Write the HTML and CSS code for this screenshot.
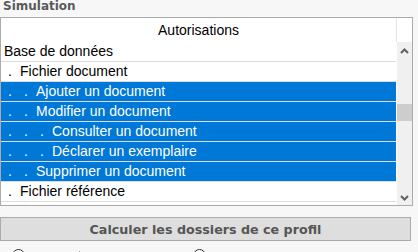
FILE: index.html
```html
<!DOCTYPE html>
<html lang="fr">
<head>
<meta charset="utf-8">
<link rel="stylesheet" href="styles.css">
</head>
<body>
<div class="page">
  <div class="title">Simulation</div>
  <div class="grid">
    <div class="head">
      <div class="head-cell">Autorisations</div>
      <div class="head-corner"></div>
    </div>
    <div class="body">
      <div class="rows">
        <div class="row">Base de données</div>
        <div class="row"><span class="ind">.</span>Fichier document</div>
        <div class="row sel"><span class="ind">.</span><span class="ind">.</span>Ajouter un document</div>
        <div class="row sel"><span class="ind">.</span><span class="ind">.</span>Modifier un document</div>
        <div class="row sel"><span class="ind">.</span><span class="ind">.</span><span class="ind">.</span>Consulter un document</div>
        <div class="row sel"><span class="ind">.</span><span class="ind">.</span><span class="ind">.</span>Déclarer un exemplaire</div>
        <div class="row sel"><span class="ind">.</span><span class="ind">.</span>Supprimer un document</div>
        <div class="row"><span class="ind">.</span>Fichier référence</div>
        <div class="row"></div>
      </div>
      <div class="scroll">
        <svg class="arrow" width="15" height="10" viewBox="0 0 15 10"><path d="M4 7 L7.5 3.5 L11 7" fill="none" stroke="#606060" stroke-width="2"/></svg>
        <div class="track"><div class="thumb"></div></div>
        <svg class="arrow down" width="15" height="10" viewBox="0 0 15 10"><path d="M4 3 L7.5 6.5 L11 3" fill="none" stroke="#606060" stroke-width="2"/></svg>
      </div>
    </div>
  </div>
  <button class="btn">Calculer les dossiers de ce profil</button>
  <div class="opts">
    <span class="radio"></span><span class="tick"></span>
    <span class="radio r2"></span>
  </div>
</div>
</body>
</html>
```
FILE: styles.css
```css
html, body {
  margin: 0;
  padding: 0;
  background: #f7f7f7;
}
.page {
  width: 418px;
  height: 252px;
  overflow: hidden;
}
.title {
  font-family: "DejaVu Sans", sans-serif;
  font-weight: bold;
  font-size: 12px;
  color: #5a5a5a;
  height: 18px;
  line-height: 14px;
  padding-left: 3px;
  margin-top: -1px;
}
.grid {
  width: 411px;
  border: 1px solid #ababab;
  background: #fff;
  font-family: "Liberation Sans", Arial, sans-serif;
  font-size: 14px;
  color: #000;
}
.head {
  display: flex;
  height: 24px;
}
.head-cell {
  width: 395px;
  text-align: center;
  line-height: 24px;
}
.head-corner {
  flex: 1;
  border-left: 1px solid #e3e3e3;
}
.body {
  display: flex;
  height: 163px;
  overflow: hidden;
}
.rows {
  width: 395px;
}
.row {
  height: 19px;
  line-height: 19px;
  border-bottom: 1px solid #dcdcdc;
  padding-left: 3px;
  white-space: nowrap;
  display: flex;
}
.row.sel {
  background: #0078d7;
  color: #fff;
}
.ind {
  display: inline-block;
  width: 16px;
  padding-left: 4px;
  box-sizing: border-box;
}
.scroll {
  width: 15px;
  margin-left: 1px;
  background: #f0f0f0;
  display: flex;
  flex-direction: column;
}
.arrow {
  display: block;
  flex: none;
  margin-top: 4px;
}
.arrow.down {
  margin-top: 2px;
  margin-bottom: 2px;
}
.track {
  flex: 1;
  padding-top: 48px;
}
.thumb {
  height: 17px;
  background: #cdcdcd;
}
.btn {
  display: block;
  margin-top: 11px;
  width: 411px;
  height: 24px;
  padding: 0;
  border: 1px solid #ababab;
  background: #dedede;
  font-family: "DejaVu Sans", sans-serif;
  font-weight: bold;
  font-size: 12.7px;
  color: #555;
  text-align: center;
}
.opts {
  position: relative;
  height: 14px;
}
.radio {
  position: absolute;
  top: 8px;
  left: 12px;
  width: 11px;
  height: 11px;
  border: 1px solid #333;
  border-radius: 50%;
  background: #fff;
}
.radio.r2 {
  left: 193px;
}
.tick {
  position: absolute;
  top: 10px;
  left: 79px;
  width: 1px;
  height: 3px;
  background: #999;
}
```
